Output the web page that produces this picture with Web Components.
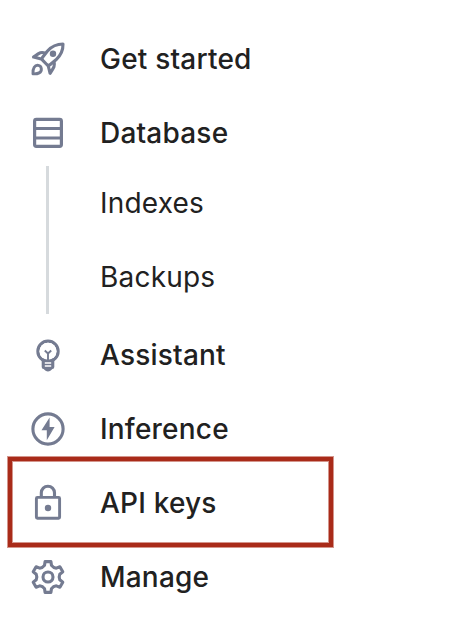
<!DOCTYPE html>
<html lang="en">
<head>
<meta charset="utf-8">
<title>Navigation</title>
<style>
body { margin: 0; background: #fff; }
</style>
</head>
<body>
<side-nav>
  <nav-item icon="rocket">Get started</nav-item>
  <nav-item icon="database">Database</nav-item>
  <nav-group>
    <nav-subitem>Indexes</nav-subitem>
    <nav-subitem>Backups</nav-subitem>
  </nav-group>
  <nav-item icon="bulb">Assistant</nav-item>
  <nav-item icon="bolt">Inference</nav-item>
  <nav-item icon="lock" highlighted>API keys</nav-item>
  <nav-item icon="gear">Manage</nav-item>
</side-nav>
<script>
// One gear tooth and the valley after it, turned in steps of 60 degrees.
function gearPath() {
  const turn = (x, y, k) => {
    const a = k * Math.PI / 3, c = Math.cos(a), s = Math.sin(a);
    return (20 + x * c - y * s).toFixed(2) + ' ' + (20 + x * s + y * c).toFixed(2);
  };
  let d = '';
  for (let k = 0; k < 6; k++) {
    d += (k ? 'L' : 'M') + turn(-2.9, -15.4, k) + 'L' + turn(2.9, -15.4, k) +
      'L' + turn(3.5, -11.6, k) + 'Q' + turn(5.3, -9.2, k) + ' ' + turn(8.3, -8.83, k);
  }
  return d + 'Z';
}

const ICONS = {
  rocket: `<path d="M35 5C28 5 23.5 7.5 19.5 12L14.6 18.2Q13.3 20 15 21.7L18.8 25.5Q20.5 27 22.3 25.5L28 20.8C33 16.2 35.2 12 35 5Z"/>
    <path d="M17.6 14.2Q14.5 13.2 12.3 13.8Q11 14.2 5.5 18.1L14.2 20.2M26 22.3Q26.8 25.4 26 27.6Q25.5 29 22.1 34.3L20 25.8"/>
    <circle cx="25" cy="14.7" r="3.2" fill="currentColor" stroke="none"/>
    <path stroke-width="2.9" d="M5 34.8Q4.6 30.8 6.2 28.3C8.3 25.1 12.7 26 13.3 29.4C14 33.7 9.6 35.2 5 34.8Z"/>`,
  database: `<rect x="6.6" y="6.3" width="26.8" height="27" rx="1.8" stroke-width="3.2"/>
    <path d="M6 15.5H34M6 25H34"/>`,
  bulb: `<circle cx="20" cy="16.2" r="10.1" stroke-width="3.2"/>
    <path fill="currentColor" stroke="none" d="M13.7 23.5H26.3V32Q26.3 33.8 24.4 34L22.4 35.8Q20 37.4 17.6 35.8L15.6 34Q13.7 33.8 13.7 32Z"/>
    <path stroke="#fff" stroke-width="1.3" d="M16.8 28H23.2M16.8 31H23.2"/>
    <circle cx="20" cy="16.2" r="8.5" fill="#fff" stroke="none"/>
    <path stroke-width="1.9" d="M16.8 15.5L20 18.5L23.2 15.5M20 18.2V25"/>`,
  bolt: `<circle cx="20" cy="20" r="15.1"/>
    <path fill="currentColor" stroke="none" d="M21.6 8.6L13.5 21.3H18.8V31.2L26.6 17.9H21.6Z"/>`,
  lock: `<rect x="8.4" y="14.4" width="23.2" height="20.9" rx="1" stroke-width="2.9"/>
    <path d="M13.3 14.5V9.8A6.6 6.6 0 0 1 26.5 9.8V14.5"/>
    <circle cx="20" cy="25" r="3.2" fill="currentColor" stroke="none"/>`,
  gear: `<path d="${gearPath()}"/><circle cx="20" cy="20" r="5"/>`
};

function define(name, html, setup) {
  customElements.define(name, class extends HTMLElement {
    constructor() {
      super();
      const template = document.createElement('template');
      template.innerHTML = html;
      this.attachShadow({ mode: 'open' }).append(template.content.cloneNode(true));
    }
    connectedCallback() { if (setup) setup(this); }
  });
}

define('nav-icon', `<style>
  :host { display: block; width: 40px; height: 40px; color: #747b91; }
  svg { display: block; fill: none; stroke: currentColor; stroke-width: 3.1; stroke-linejoin: round; }
</style><svg width="40" height="40" viewBox="0 0 40 40" aria-hidden="true"></svg>`,
  el => { el.shadowRoot.querySelector('svg').innerHTML = ICONS[el.getAttribute('name')] || ''; });

define('nav-item', `<style>
  :host { display: flex; align-items: center; gap: 32px; height: 66px; padding-left: 28px;
    font-weight: 490; position: relative; }
  :host([highlighted])::after { content: ""; position: absolute; box-sizing: border-box;
    left: 8px; top: -13px; width: 325px; height: 90px; border: 4px solid #a92b19;
    box-shadow: 0 0 0 1px #a92b1980, inset 0 0 0 1px #a92b1980; }
</style><nav-icon></nav-icon><span><slot></slot></span>`,
  el => {
    const icon = el.shadowRoot.querySelector('nav-icon');
    icon.setAttribute('name', el.getAttribute('icon'));
    icon.shadowRoot.querySelector('svg').innerHTML = ICONS[el.getAttribute('icon')];
  });

define('nav-subitem', `<style>
  :host { display: flex; align-items: center; height: 74px; font-weight: 400; }
</style><span><slot></slot></span>`);

define('nav-group', `<style>
  :host { display: block; margin: -8px 0 0 46px; padding-left: 51px; border-left: 3px solid #d6dadd; }
</style><slot></slot>`);

define('side-nav', `<style>
  :host { display: flex; flex-direction: column; gap: 8px; box-sizing: border-box; height: 632px;
    padding-top: 26px; color: #212121; font: 28px/34px Inter, "Liberation Sans", sans-serif;
    letter-spacing: 0.2px; }
</style><slot></slot>`);
</script>
</body>
</html>
